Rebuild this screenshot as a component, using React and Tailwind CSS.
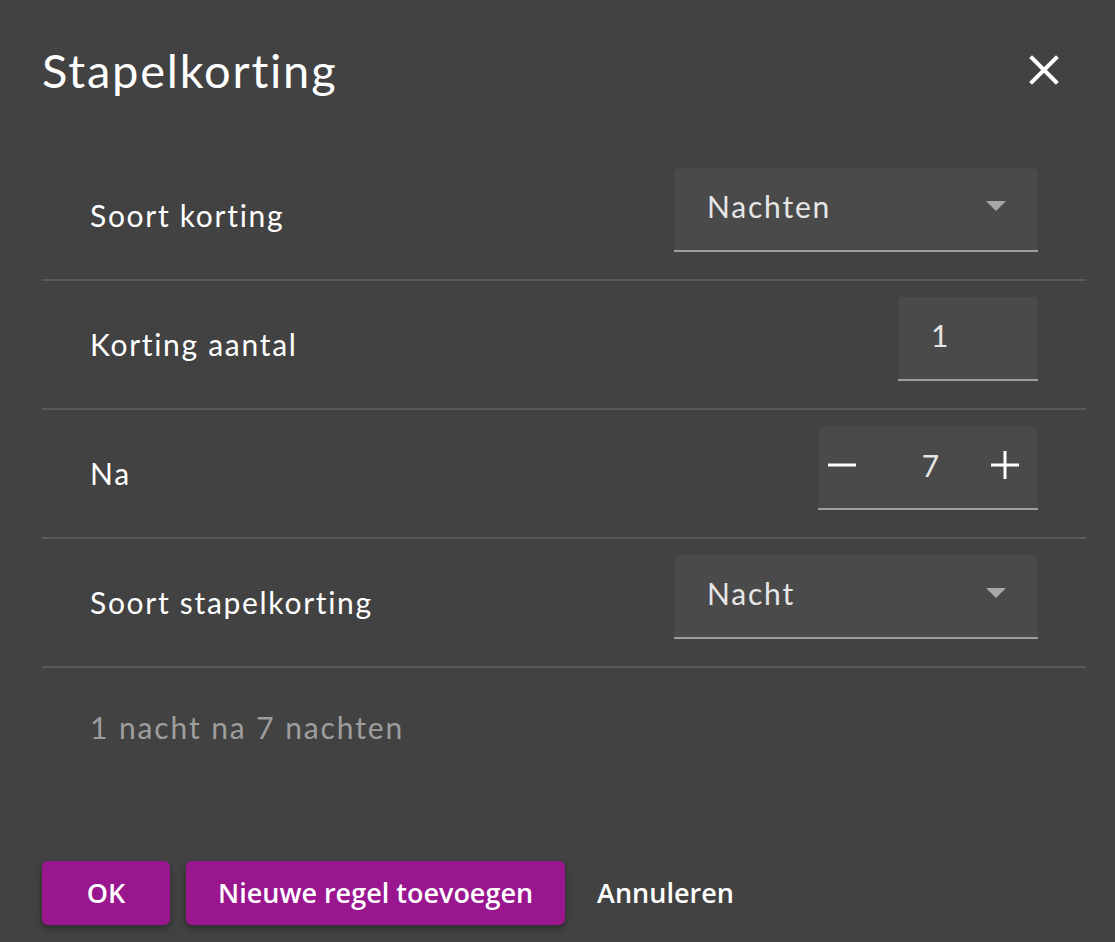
import React from 'react';

const Caret = () => (
    <svg width="20" height="10" viewBox="0 0 20 10" className="shrink-0">
        <path d="M0 0 L20 0 L10 10 Z" fill="#a8a8a8" />
    </svg>
);

const Row = ({ label, children }) => (
    <div className="flex items-center justify-between border-b-2 border-[#5a5a5a] pl-[48px] pr-[48px]">
        <span className="text-[30px] tracking-[1.7px] text-white">{label}</span>
        <div className="mt-[16px] mb-[27px]">{children}</div>
    </div>
);

const Field = ({ width, children }) => (
    <div className={`${width} h-[84px] bg-[#4a4a4a] rounded-t-[6px] border-b-2 border-[#9e9e9e] flex items-center pl-[33px] pr-[32px] pb-[6px] text-[30px] tracking-[1.8px] text-[#e6e6e6]`}>
        {children}
    </div>
);

const App = () => {
    return (
        <div className="w-[1115px] h-[942px] bg-[#424242] overflow-hidden font-['Lato','Noto_Sans',sans-serif]">
            <div className="flex items-center justify-between pl-[42px] pr-[56px] pt-[40px] h-[100px]">
                <h1 className="text-[47px] tracking-[1.8px] text-white leading-none">Stapelkorting</h1>
                <svg width="30" height="30" viewBox="0 0 30 30">
                    <path d="M3 3 L27 27 M27 3 L3 27" stroke="white" strokeWidth="4" strokeLinecap="square" />
                </svg>
            </div>

            <div className="ml-[42px] mr-[29px] mt-[52px]">
                <Row label="Soort korting">
                    <Field width="w-[364px]">
                        <span className="flex-1">Nachten</span>
                        <Caret />
                    </Field>
                </Row>
                <Row label="Korting aantal">
                    <Field width="w-[140px]">
                        <span>1</span>
                    </Field>
                </Row>
                <Row label="Na">
                    <div className="w-[220px] h-[84px] bg-[#4a4a4a] rounded-t-[6px] border-b-2 border-[#9e9e9e] flex items-center justify-between pl-[10px] pr-[19px] pb-[4px] text-[30px] text-[#e6e6e6]">
                        <svg width="28" height="28" viewBox="0 0 28 28">
                            <path d="M0 14 L28 14" stroke="white" strokeWidth="3" />
                        </svg>
                        <span className="ml-[14px]">7</span>
                        <svg width="28" height="28" viewBox="0 0 28 28">
                            <path d="M0 14 L28 14 M14 0 L14 28" stroke="white" strokeWidth="3" />
                        </svg>
                    </div>
                </Row>
                <Row label="Soort stapelkorting">
                    <Field width="w-[364px]">
                        <span className="flex-1">Nacht</span>
                        <Caret />
                    </Field>
                </Row>
                <p className="pl-[48px] pt-[37px] text-[30px] tracking-[1.9px] text-[#9e9e9e]">1 nacht na 7 nachten</p>
            </div>

            <div className="flex items-center gap-[16px] pl-[42px] mt-[111px] font-['Open_Sans',sans-serif] font-semibold text-[27px] text-white">
                <button className="w-[128px] h-[64px] rounded-[6px] bg-[#99168f] shadow-[0_3px_6px_rgba(0,0,0,0.35)]">OK</button>
                <button className="h-[64px] px-[32px] rounded-[6px] bg-[#99168f] shadow-[0_3px_6px_rgba(0,0,0,0.35)]">Nieuwe regel toevoegen</button>
                <button className="h-[64px] px-[16px]">Annuleren</button>
            </div>
        </div>
    );
};

export default App;
